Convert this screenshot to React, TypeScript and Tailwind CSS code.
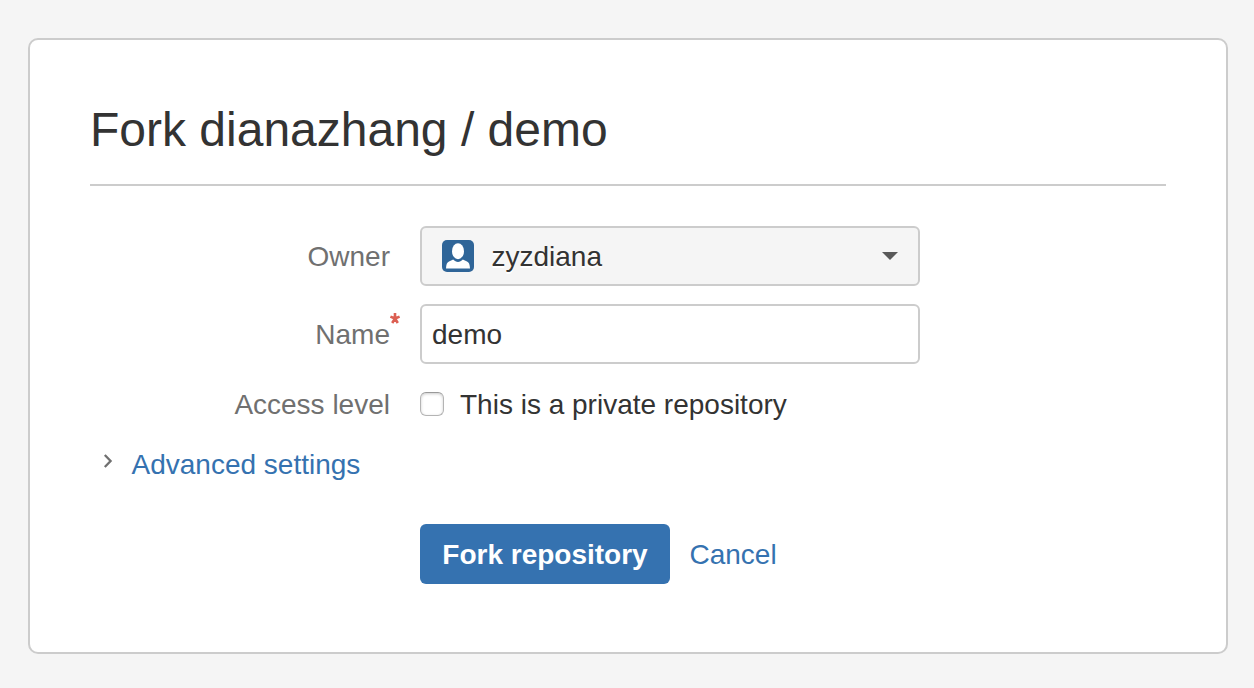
import React from "react";

function UserAvatar() {
  return (
    <svg width="32" height="32" viewBox="0 0 32 32" className="shrink-0">
      <rect width="32" height="32" rx="5" fill="#2f6598" />
      <ellipse cx="16" cy="11.200" rx="6" ry="8" fill="#fff" />
      <path d="M4 28.500C4.300 24.500 4.800 22.400 7 21.500L11.200 19.600C12.700 21.300 14.200 22 16 22s3.300-.7 4.800-2.400l4.200 1.900c2.200.9 2.700 3 3 7z" fill="#fff" />
      <path d="M10.500 17.500C12 19.400 14 20.500 16 20.500s4-1.100 5.500-3" stroke="#2f6598" strokeWidth="1.200" fill="none" />
    </svg>
  );
}

function RequiredMark() {
  return (
    <svg className="absolute top-[-5px] left-[299px]" width="12" height="12" viewBox="0 0 12 12">
      <path d="M6 1v6M1.400 4.600 6 6.500l4.600-1.900M3.200 11 6 6.500 8.800 11" stroke="#dc5f52" strokeWidth="2.600" fill="none" />
    </svg>
  );
}

export default function App() {
  return (
    <main className="h-[688px] w-[1254px] overflow-hidden bg-[#f5f5f5] pt-[38px] pl-7 font-['Liberation_Sans',Arial,sans-serif] text-[28px] leading-8 text-[#333]">
      <form className="h-[616px] w-[1200px] rounded-[10px] border-2 border-[#ccc] bg-white px-[60px] pt-[60px]" onSubmit={(e) => e.preventDefault()}>
        <h1 className="h-[86px] w-[1076px] border-b-2 border-[#ccc] text-[48px] leading-[60px] whitespace-nowrap">
          Fork dianazhang / demo
        </h1>
        <div className="mt-10 flex h-[60px] items-center">
          <span className="w-[300px] pt-0.5 text-right text-[#707070]">Owner</span>
          <button type="button" className="ml-[30px] flex h-[60px] w-[500px] items-center rounded-md border-2 border-[#ccc] bg-[#f5f5f5] px-5">
            <UserAvatar />
            <span className="ml-[17.5px] flex-1 pt-0.5 text-left [text-shadow:0_2px_0_#fff]">zyzdiana</span>
            <svg width="16" height="8" viewBox="0 0 16 8"><path d="M0 0h16L8 8z" fill="#595959" /></svg>
          </button>
        </div>
        <div className="mt-[18px] flex h-[60px] items-center">
          <label htmlFor="name" className="relative w-[300px] pt-0.5 text-right text-[#707070]">
            Name
            <RequiredMark />
          </label>
          <input id="name" defaultValue="demo" className="ml-[30px] h-[60px] w-[500px] rounded-md border-2 border-[#ccc] bg-white px-[10px] pt-0.5 outline-none" />
        </div>
        <div className="mt-6 flex h-8 items-center">
          <span className="w-[300px] pt-0.5 text-right text-[#707070]">Access level</span>
          <input id="private" type="checkbox" className="ml-[30px] size-6 appearance-none rounded-[6px] border border-[#b4b4b4] border-t-[#999] bg-white shadow-[inset_0_1px_3px_#ccc]" />
          <label htmlFor="private" className="ml-4 pt-0.5">This is a private repository</label>
        </div>
        <div className="mt-7 flex h-8 items-center">
          <svg className="mt-[-6px] ml-[13px]" width="10" height="14" viewBox="0 0 10 14"><path d="m1.800 1 5.800 6-5.800 6" stroke="#707070" strokeWidth="2.300" fill="none" /></svg>
          <a href="#advanced" className="ml-[18.5px] pt-0.5 text-[#3572b0]">Advanced settings</a>
        </div>
        <div className="mt-11 ml-[330px] flex h-[60px] items-center">
          <button type="submit" className="h-[60px] w-[250px] rounded-md bg-[#3572b0] pt-0.5 font-bold text-white">Fork repository</button>
          <a href="#cancel" className="ml-[19.5px] pt-0.5 text-[#3572b0]">Cancel</a>
        </div>
      </form>
    </main>
  );
}
